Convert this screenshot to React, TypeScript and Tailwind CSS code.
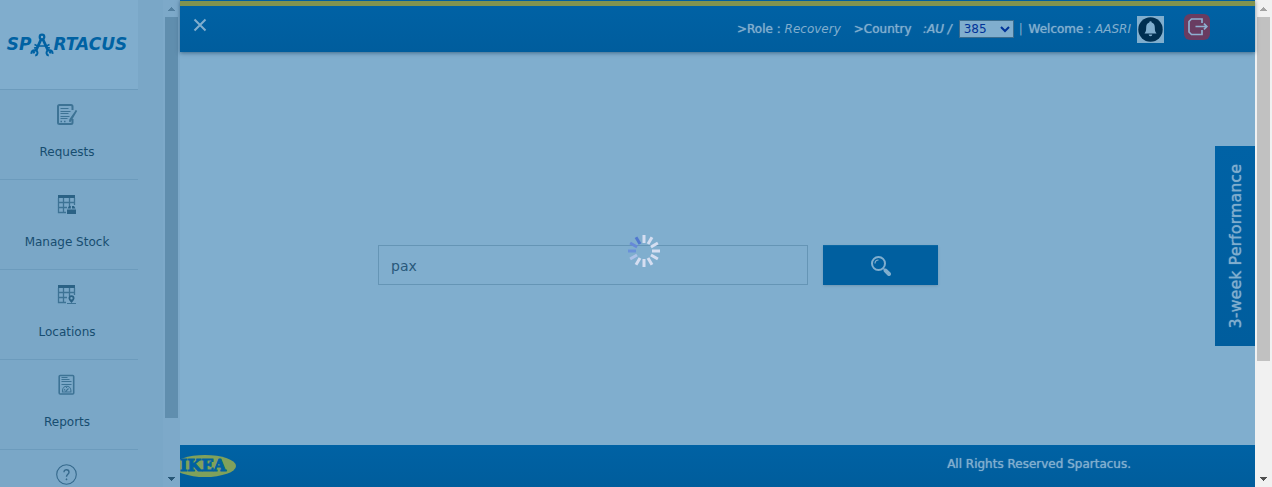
import React from "react";

function ScrollArrow({ up, className }: { up?: boolean; className: string }) {
  return (
    <svg viewBox="0 0 7 4" className={`h-1 w-[7px] ${className}`} fill="currentColor" shapeRendering="crispEdges" aria-hidden="true">
      <path d={up ? "M0 4h7L3.5 0z" : "M0 0h7L3.5 4z"} />
    </svg>
  );
}

function RequestsIcon() {
  return (
    <svg viewBox="0 0 22 22" className="size-[22px]" fill="none" stroke="#3d7395" aria-hidden="true">
      <path d="M16.500 6V2.500a1.500 1.500 0 0 0-1.500-1.500H3.500A1.500 1.500 0 0 0 2 2.500v16A1.500 1.500 0 0 0 3.500 20H15a1.500 1.500 0 0 0 1.500-1.500V15" strokeWidth="2" />
      <path d="M4.500 4.500h8M4.500 7.500h10M4.500 9.500h8M4.500 12.500h9M4.500 14.500h7" strokeWidth="1.200" />
      <path d="M4.500 17.500H6M8 17.500h1.500" strokeWidth="1.500" />
      <path d="M20.500 6.500l-5.500 9.500-1.300 1.700.4-2.200z" strokeWidth="1.500" />
    </svg>
  );
}

function TableBase() {
  return (
    <>
      <path d="M2 1h17v3H2z" fill="#2b6285" stroke="none" />
      <path d="M2.500 4v14.500H10M7.500 4v15M13.500 4v8M18.500 4v7M2 8.500h17M2 13.500h9" strokeWidth="1.300" />
    </>
  );
}

function StockIcon() {
  return (
    <svg viewBox="0 0 22 22" className="size-[22px]" fill="none" stroke="#3d7395" aria-hidden="true">
      <TableBase />
      <path d="M11 15.500h9v4.500h-9zM11.500 14.500l1.500-2.500h1.800v2.500zM16 14.500V12h2l1.500 2.500z" fill="#2b6285" stroke="none" />
    </svg>
  );
}

function LocationsIcon() {
  return (
    <svg viewBox="0 0 22 22" className="size-[22px]" fill="none" stroke="#3d7395" aria-hidden="true">
      <TableBase />
      <path d="M15.500 19c-1.500-2-3-3.300-3-4.800a3 3 0 0 1 6 0c0 1.500-1.500 2.800-3 4.800zM15.500 13a1.200 1.200 0 1 0 0 2.400 1.200 1.200 0 0 0 0-2.400z" fill="#2b6285" fillRule="evenodd" stroke="none" />
      <path d="M11 19.500h9" />
    </svg>
  );
}

function ReportsIcon() {
  return (
    <svg viewBox="0 0 22 22" className="size-[22px]" fill="none" stroke="#3d7395" aria-hidden="true">
      <rect x="3.200" y="1.500" width="14.500" height="18.500" rx="1" strokeWidth="1.600" />
      <path d="M5.500 3.500h6M5.500 5.500h8M5.500 7.500h10M5.500 10.500h10" strokeWidth="1.200" />
      <path d="M6.500 18v-1.500a4.200 4.200 0 0 1 8.400 0V18zM9.500 17.500l3-3M8 16.500l1-1.500M10.500 14v-1" strokeWidth="1.100" />
    </svg>
  );
}

function HelpIcon() {
  return (
    <svg viewBox="0 0 22 22" className="size-[22px]" fill="none" stroke="#35698c" aria-hidden="true">
      <circle cx="10.500" cy="10.500" r="9.800" strokeWidth="1.100" />
      <path d="M8 8.200c0-3.400 5-3.300 5 0 0 2-2.500 2.200-2.500 4.600" strokeWidth="1.400" />
      <circle cx="10.500" cy="15.300" r=".5" fill="#35698c" />
    </svg>
  );
}

function CompassLetter() {
  return (
    <svg viewBox="0 0 24 24" className="-mx-px size-6" fill="none" stroke="#0062a3" aria-hidden="true">
      <circle cx="12" cy="4" r="2.300" strokeWidth="2.200" />
      <path d="M11 6.500L6 17.500M13 6.500l5 11" strokeWidth="2.800" />
      <path d="M4.500 11.500l3 1.500h9l3-1.500M4 15l3-.5M20 15l-3-.5" strokeWidth="1.600" />
      <path d="M1.500 20.800c-.3-2 1-3.600 3-3.600 2.200 0 3.300 1.600 2.900 3.300-.3 1.200-1.200 1.900-2.200 2.100M4.300 20.300l-.8-2" strokeWidth="2" />
      <path d="M22.500 20.800c.3-2-1-3.600-3-3.600-2.200 0-3.300 1.600-2.900 3.300.3 1.200 1.200 1.900 2.200 2.100M19.700 20.300l.8-2" strokeWidth="2" />
    </svg>
  );
}

const menu = [
  { label: "Requests", Icon: RequestsIcon },
  { label: "Manage Stock", Icon: StockIcon },
  { label: "Locations", Icon: LocationsIcon },
  { label: "Reports", Icon: ReportsIcon },
];

function Sidebar() {
  return (
    <aside className="flex w-[180px] shrink-0 overflow-hidden bg-[#7aa7c7]">
      <div className="w-[138px]">
        <a href="#home" aria-label="Spartacus" className="flex h-[90px] items-center justify-center border-b border-[#6c9bbc] bg-[#80adcd] pt-px pr-1 font-['DejaVu_Sans',sans-serif] text-[17px] font-bold text-[#0062a3] italic">
          <span>SP</span>
          <CompassLetter />
          <span>RTACUS</span>
        </a>
        <nav className="font-['DejaVu_Sans',sans-serif] text-xs text-[#174d70]">
          {menu.map(({ label, Icon }) => (
            <a key={label} href={`#${label}`} className="flex h-[90px] flex-col items-center gap-4 border-b border-[#6c9bbc] pt-[14px] pr-1">
              <Icon />
              <span className="leading-5">{label}</span>
            </a>
          ))}
          <a href="#help" aria-label="Help" className="flex flex-col items-center pt-[14px] pr-1">
            <HelpIcon />
          </a>
        </nav>
      </div>
      <div className="ml-auto flex w-[17px] flex-col items-center bg-[#7da9c9]">
        <div className="flex h-[17px] shrink-0 items-center"><ScrollArrow up className="text-[#527f9f]" /></div>
        <div className="min-h-0 w-[13px] flex-1"><div className="h-[401px] max-h-[89%] bg-[#608eae]" /></div>
        <div className="flex h-[17px] shrink-0 items-center"><ScrollArrow className="text-[#285777]" /></div>
      </div>
    </aside>
  );
}

function Header() {
  return (
    <header className="z-10 flex h-[52px] shrink-0 flex-col border-t border-[#005c9f] bg-linear-to-b from-[#0062a5] to-[#005d9d] shadow-[0_1px_4px_rgba(0,40,70,0.5)]">
      <div className="h-[5px] shrink-0 bg-[#80934f]" />
      <div className="flex flex-1 items-center pr-[45px] pl-[13px] font-['DejaVu_Sans',sans-serif] text-xs text-[#80aece]">
        <button type="button" aria-label="Close menu" className="mb-2">
          <svg viewBox="0 0 14 14" className="size-[14px]" fill="none" stroke="currentColor" strokeWidth="2" aria-hidden="true"><path d="M1.500 1.500l11 11M12.500 1.500l-11 11" /></svg>
        </button>
        <div className="ml-auto flex items-center whitespace-pre">
          <span className="[text-shadow:0_0_1px_currentColor]">&gt;Role : </span>
          <i>Recovery</i>
          <label htmlFor="country" className="mr-[3px] ml-[13px] [text-shadow:0_0_1px_currentColor]">&gt;Country  <i> :AU / </i></label>
          <span className="relative flex items-center">
            <select id="country" defaultValue="385" className="h-[18px] w-[55px] appearance-none border border-[#3b6d8f] bg-[#80aece] pl-1 leading-4 text-[#003399]">
              <option>385</option>
            </select>
            <svg viewBox="0 0 10 7" className="pointer-events-none absolute right-1 h-[7px] w-[10px]" fill="none" stroke="#003399" strokeWidth="2" aria-hidden="true"><path d="M1 1l4 4 4-4" /></svg>
          </span>
          <span className="mr-[2px] ml-[5px]">|</span>
          <span className="[text-shadow:0_0_1px_currentColor]"> Welcome : </span>
          <i>AASRI</i>
          <button type="button" aria-label="Notifications" className="ml-1.5 size-[27px] bg-[#80aece]">
            <svg viewBox="0 0 27 27" aria-hidden="true">
              <circle cx="13.500" cy="13.500" r="12.200" fill="#002f50" />
              <path d="M13.500 5.200a1.200 1.200 0 0 1 1.200 1.300c2.200.6 3.100 2.500 3.100 4.800 0 3.600.5 4.700 1.700 6.200h-12c1.200-1.500 1.700-2.600 1.700-6.200 0-2.300.9-4.200 3.100-4.800a1.200 1.200 0 0 1 1.200-1.300zM11.700 18.500h3.600a1.800 1.800 0 0 1-3.600 0z" fill="#80aece" />
            </svg>
          </button>
          <button type="button" aria-label="Log out" className="mb-1 ml-5 size-[26px] rounded-md bg-[#693c61]">
            <svg viewBox="0 0 26 26" fill="none" stroke="#8eafd0" strokeWidth="1.700" aria-hidden="true">
              <path d="M18 9V5H7.500L5 7.500V18l2.500 2.500H18v-4.500M11.500 12.500h11M20 9.700l2.800 2.800L20 15.300" />
            </svg>
          </button>
        </div>
      </div>
    </header>
  );
}

function SearchForm() {
  return (
    <form className="flex w-[560px] gap-[15px]" onSubmit={(e) => e.preventDefault()}>
      <input aria-label="Search" defaultValue="pax" className="h-10 min-w-0 flex-1 border border-[#6595b5] bg-transparent px-3 pt-[2px] font-['DejaVu_Sans',sans-serif] text-sm text-[#29597b] outline-none" />
      <button type="submit" aria-label="Search" className="flex h-10 w-[115px] items-center justify-center border-t border-[#0b68a4] bg-[#005f9f] shadow-sm">
        <svg viewBox="0 0 20 20" className="size-5" fill="none" stroke="#80aece" aria-hidden="true">
          <circle cx="7.500" cy="7.500" r="6.500" strokeWidth="2" />
          <path d="M4 7.500A3.600 3.600 0 0 1 7.500 4" strokeWidth="1.200" />
          <path d="M12.200 12.200l2.300 2.300" strokeWidth="1.500" />
          <path d="M14.600 14.600l3.400 3.400" strokeWidth="4" strokeLinecap="round" />
        </svg>
      </button>
    </form>
  );
}

const spokes = ["#d5def1", "#d5def1", "#d5def1", "#d5def1", "#d5def1", "#d5def1", "#d5def1", "#d5def1", "#adc2e8", "#6a91d9", "#6689d8", "#5078cf"];

function Spinner() {
  return (
    <div role="status" aria-label="Loading" className="pointer-events-none absolute inset-0 z-30 flex items-center justify-center pt-[15px] pl-4">
      <svg viewBox="0 0 32 32" className="size-8">
        {spokes.map((c, i) => (
          <rect key={i} x="14.500" y="0" width="3" height="8" fill={c} transform={`rotate(${i * 30} 16 16)`} />
        ))}
      </svg>
    </div>
  );
}

function Footer() {
  return (
    <footer className="flex h-[42px] shrink-0 items-center justify-between bg-linear-to-b from-[#0062a4] to-[#005d9c] pr-[124px] pb-[5px] font-['DejaVu_Sans',sans-serif] text-xs text-[#80aece]">
      <svg viewBox="0 0 56 22" className="mt-1 h-[22px] w-14" role="img" aria-label="IKEA">
        <ellipse cx="25" cy="11" rx="31" ry="11" fill="#80a15b" />
        <text x="0" y="16" fontFamily="DejaVu Serif, serif" fontWeight="700" fontSize="16" fill="#0061a1" stroke="#0061a1" strokeWidth="1">IKEA</text>
      </svg>
      <p className="[text-shadow:0_0_1px_currentColor]">All Rights Reserved Spartacus.</p>
    </footer>
  );
}

export default function App() {
  return (
    <div className="relative flex h-screen overflow-hidden bg-[#80aece]">
      <Sidebar />
      <div className="relative flex min-w-0 flex-1 flex-col">
        <Header />
        <main className="flex flex-1 items-center justify-center pt-[33px] pr-[119px]">
          <SearchForm />
        </main>
        <Footer />
        <button type="button" className="absolute top-[146px] right-0 z-20 flex h-[200px] w-10 items-center justify-center bg-linear-to-b from-[#0062a5] to-[#005d9d] pl-[2px] font-['DejaVu_Sans',sans-serif] text-base text-[#80aece]">
          <span className="rotate-180 whitespace-nowrap [text-shadow:0_0_1px_currentColor] [writing-mode:vertical-rl]">3-week Performance</span>
        </button>
      </div>
      <div className="flex w-[17px] shrink-0 flex-col items-center bg-[#f1f1f1]">
        <div className="flex h-[17px] shrink-0 items-center"><ScrollArrow up className="text-[#a3a3a3]" /></div>
        <div className="min-h-0 w-[13px] flex-1"><div className="h-[76%] bg-[#c1c1c1]" /></div>
        <div className="flex h-[17px] shrink-0 items-center"><ScrollArrow className="text-[#505050]" /></div>
      </div>
      <Spinner />
    </div>
  );
}
